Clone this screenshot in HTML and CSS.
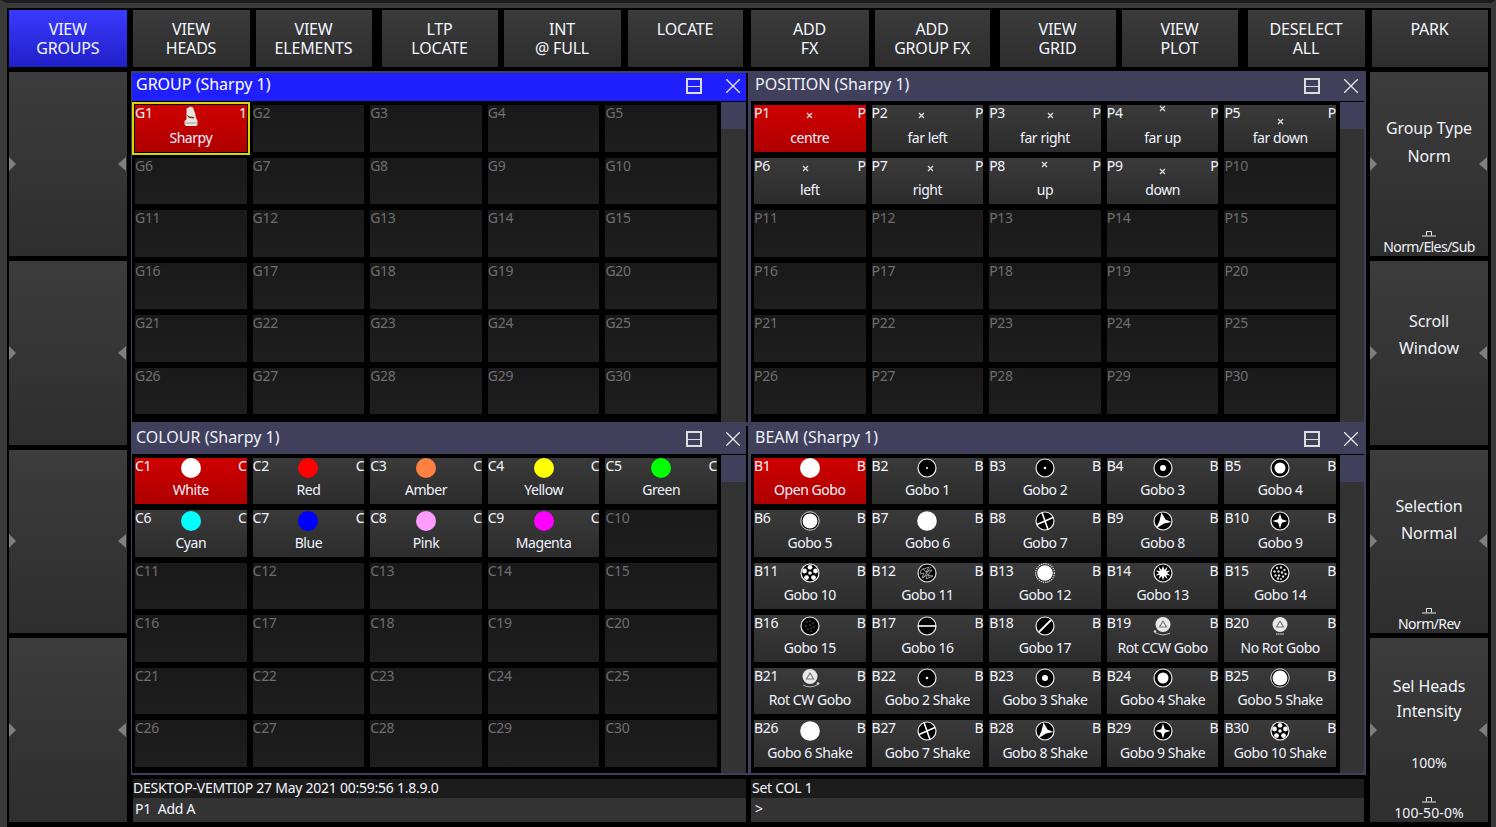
FILE: index.html
```html
<!DOCTYPE html>
<html lang="en">
<head>
<meta charset="utf-8">
<title>Console</title>
<link rel="stylesheet" href="styles.css">
</head>
<body>
<svg class="defs" aria-hidden="true">
  <symbol id="mk" viewBox="0 0 7 7"><path d="M1 1 6 6M6 1 1 6" stroke="#ddd" stroke-width="1.3" fill="none"/></symbol>
  <symbol id="sharpy" viewBox="0 0 20 20"><path d="M5.500 2.500 9.500 0.500 12 1.500 14 7l1.500 6 1 1.500V19l-1.500 1H5l-1.500-1.500V15l2-1.500z" fill="#e8e4e0"/><path d="M5.500 9l3.500 1.500 4.500.5-1 1.500-4.500-.5z" fill="#8a3030"/><path d="M4 16.500h12v1H4z" fill="#a09a96"/></symbol>
  <symbol id="open" viewBox="0 0 20 20"><circle cx="10" cy="10" r="10" fill="#fff"/></symbol>
  <symbol id="g1" viewBox="0 0 20 20"><circle cx="10" cy="10" r="9" fill="#000" stroke="#eee" stroke-width="1.200"/><circle cx="10" cy="10" r="1" fill="#fff"/></symbol>
  <symbol id="g2" viewBox="0 0 20 20"><circle cx="10" cy="10" r="9" fill="#000" stroke="#eee" stroke-width="1.200"/><circle cx="10" cy="10" r="1.300" fill="#fff"/></symbol>
  <symbol id="g3" viewBox="0 0 20 20"><circle cx="10" cy="10" r="9" fill="#000" stroke="#eee" stroke-width="1.200"/><circle cx="10" cy="10" r="3" fill="#fff"/></symbol>
  <symbol id="g4" viewBox="0 0 20 20"><circle cx="10" cy="10" r="9" fill="#000" stroke="#eee" stroke-width="1.200"/><circle cx="10" cy="10" r="5.500" fill="#fff"/></symbol>
  <symbol id="g5" viewBox="0 0 20 20"><circle cx="10" cy="10" r="9.200" fill="#000" stroke="#ddd"/><circle cx="10" cy="10" r="7.500" fill="#fff"/></symbol>
  <symbol id="g6" viewBox="0 0 20 20"><circle cx="10" cy="10" r="9.800" fill="#fff"/></symbol>
  <symbol id="g7" viewBox="0 0 20 20"><circle cx="10" cy="10" r="9" fill="#000" stroke="#eee" stroke-width="1.200"/><path d="M2 13.500 18 6.500M7 1.500l6 17" stroke="#fff" stroke-width="1.600" fill="none"/></symbol>
  <symbol id="g8" viewBox="0 0 20 20"><circle cx="10" cy="10" r="9" fill="#000" stroke="#eee" stroke-width="1.200"/><path d="M8.500 1.500 12.500 8.500 18.500 11 11 12.500 3 17.500 6.500 10z" fill="#fff"/></symbol>
  <symbol id="g9" viewBox="0 0 20 20"><circle cx="10" cy="10" r="9" fill="#000" stroke="#eee" stroke-width="1.200"/><path d="M10 2.500 11.800 8.200 17.500 10 11.800 11.800 10 17.500 8.200 11.800 2.500 10 8.200 8.200z" fill="#fff"/></symbol>
  <symbol id="g10" viewBox="0 0 20 20"><circle cx="10" cy="10" r="9.500" fill="#fff"/><circle cx="10" cy="10" r="8.400" fill="#000"/><g fill="#fff"><circle cx="10" cy="4.300" r="2.400"/><circle cx="15.500" cy="8" r="2.400"/><circle cx="13.500" cy="14.600" r="2.400"/><circle cx="6.500" cy="14.600" r="2.400"/><circle cx="4.500" cy="8" r="2.400"/><circle cx="10" cy="10" r="1.800"/></g></symbol>
  <symbol id="g11" viewBox="0 0 20 20"><circle cx="10" cy="10" r="9" fill="#000" stroke="#ddd" stroke-width="1.200"/><path d="M4 7l8-3-3 5 6-2-4 5 5 1-7 3 1-4-5 3 2-5-4 1zM6 5l7 10M14 4 6 15" stroke="#ccc" stroke-width=".7" fill="none"/></symbol>
  <symbol id="g12" viewBox="0 0 20 20"><circle cx="10" cy="10" r="9.300" fill="#222" stroke="#fff" stroke-width="1.200" stroke-dasharray="1.200 1"/><circle cx="10" cy="10" r="7.800" fill="#fff"/></symbol>
  <symbol id="g13" viewBox="0 0 20 20"><circle cx="10" cy="10" r="9" fill="#000" stroke="#eee" stroke-width="1.200"/><path d="M10 2.500 11.300 7 14.500 3.600 13.200 8 17.500 7.500 14 10 17.500 12.500 13.200 12 14.500 16.400 11.300 13 10 17.500 8.700 13 5.500 16.400 6.800 12 2.500 12.500 6 10 2.500 7.500 6.800 8 5.500 3.600 8.700 7z" fill="#fff"/></symbol>
  <symbol id="g14" viewBox="0 0 20 20"><circle cx="10" cy="10" r="9" fill="#000" stroke="#eee" stroke-width="1.200"/><g fill="#ddd"><circle cx="7" cy="5" r="1.200"/><circle cx="11" cy="4.500" r="1.200"/><circle cx="14.500" cy="7" r="1.200"/><circle cx="4.500" cy="8.500" r="1.200"/><circle cx="8.500" cy="8.500" r="1.200"/><circle cx="12" cy="9.500" r="1.200"/><circle cx="15.500" cy="11" r="1.200"/><circle cx="5.500" cy="12.500" r="1.200"/><circle cx="9" cy="12.500" r="1.200"/><circle cx="13" cy="13.500" r="1.200"/><circle cx="8" cy="15.500" r="1.200"/><circle cx="11" cy="16" r="1"/></g></symbol>
  <symbol id="g15" viewBox="0 0 20 20"><circle cx="10" cy="10" r="9" fill="#000" stroke="#eee" stroke-width="1.200"/><g fill="#bbb"><circle cx="7" cy="6" r=".6"/><circle cx="10" cy="5" r=".6"/><circle cx="13" cy="7" r=".6"/><circle cx="6" cy="10" r=".6"/><circle cx="10" cy="9" r=".6"/><circle cx="14" cy="11" r=".6"/><circle cx="8" cy="13" r=".6"/><circle cx="11" cy="12" r=".6"/><circle cx="11" cy="15" r=".6"/></g></symbol>
  <symbol id="g16" viewBox="0 0 20 20"><circle cx="10" cy="10" r="9" fill="#000" stroke="#eee" stroke-width="1.200"/><path d="M1 10h18" stroke="#fff" stroke-width="1.600"/></symbol>
  <symbol id="g17" viewBox="0 0 20 20"><circle cx="10" cy="10" r="9" fill="#000" stroke="#eee" stroke-width="1.200"/><path d="M4 16 16 4" stroke="#fff" stroke-width="1.800"/></symbol>
  <symbol id="rot" viewBox="0 0 20 20"><circle cx="10" cy="8.500" r="7.500" fill="#e8e8e8"/><path d="M10 4l4.500 7.500h-9z" fill="#777"/><path d="M10 6.200l2.600 4.300H7.400z" fill="#eee"/></symbol>
  <symbol id="rotccw" viewBox="0 0 20 20"><use href="#rot"/><path d="M2 16.500Q10 21 17 17" stroke="#bbb" fill="none"/><circle cx="2" cy="15.500" r="1.300" fill="#ddd"/></symbol>
  <symbol id="rotcw" viewBox="0 0 20 20"><use href="#rot"/><path d="M3 17Q10 21 18 16.500" stroke="#bbb" fill="none"/><circle cx="18" cy="15.500" r="1.300" fill="#ddd"/></symbol>
  <symbol id="norot" viewBox="0 0 20 20"><use href="#rot"/><path d="M6 18h8" stroke="#999" stroke-width="2" stroke-dasharray="1.500 .6"/></symbol>
  <symbol id="hold" viewBox="0 0 14 6"><path d="M4.500 4.500V.5h5v4M0 5h14" stroke="#e8e8e8" fill="none"/></symbol>
</svg>

<div class="app">
  <div class="top">
    <div class="btn active">VIEW<br>GROUPS</div>
    <div class="btn">VIEW<br>HEADS</div>
    <div class="btn">VIEW<br>ELEMENTS</div>
    <div class="btn">LTP<br>LOCATE</div>
    <div class="btn">INT<br>@ FULL</div>
    <div class="btn">LOCATE</div>
    <div class="btn">ADD<br>FX</div>
    <div class="btn">ADD<br>GROUP FX</div>
    <div class="btn">VIEW<br>GRID</div>
    <div class="btn">VIEW<br>PLOT</div>
    <div class="btn">DESELECT<br>ALL</div>
    <div class="btn">PARK</div>
  </div>

  <div class="main">
    <div class="side side-left">
      <div class="key"><i class="tri tri-r"></i><i class="tri tri-l"></i></div>
      <div class="key"><i class="tri tri-r"></i><i class="tri tri-l"></i></div>
      <div class="key"><i class="tri tri-r"></i><i class="tri tri-l"></i></div>
      <div class="key"><i class="tri tri-r"></i><i class="tri tri-l"></i></div>
    </div>

    <div class="center">
      <section class="panel panel-l">
        <header class="head head-on"><span class="title">GROUP (Sharpy 1)</span><i class="split"></i><svg class="close" viewBox="0 0 14 14"><path d="M0 0 14 14M14 0 0 14"/></svg></header>
        <div class="body">
          <div class="grid">
            <div class="cell on sel"><span class="id">G1</span><span class="type">1</span><svg class="ico"><use href="#sharpy"/></svg><span class="name">Sharpy</span></div>
            <div class="cell empty"><span class="id">G2</span></div>
            <div class="cell empty"><span class="id">G3</span></div>
            <div class="cell empty"><span class="id">G4</span></div>
            <div class="cell empty"><span class="id">G5</span></div>
            <div class="cell empty"><span class="id">G6</span></div>
            <div class="cell empty"><span class="id">G7</span></div>
            <div class="cell empty"><span class="id">G8</span></div>
            <div class="cell empty"><span class="id">G9</span></div>
            <div class="cell empty"><span class="id">G10</span></div>
            <div class="cell empty"><span class="id">G11</span></div>
            <div class="cell empty"><span class="id">G12</span></div>
            <div class="cell empty"><span class="id">G13</span></div>
            <div class="cell empty"><span class="id">G14</span></div>
            <div class="cell empty"><span class="id">G15</span></div>
            <div class="cell empty"><span class="id">G16</span></div>
            <div class="cell empty"><span class="id">G17</span></div>
            <div class="cell empty"><span class="id">G18</span></div>
            <div class="cell empty"><span class="id">G19</span></div>
            <div class="cell empty"><span class="id">G20</span></div>
            <div class="cell empty"><span class="id">G21</span></div>
            <div class="cell empty"><span class="id">G22</span></div>
            <div class="cell empty"><span class="id">G23</span></div>
            <div class="cell empty"><span class="id">G24</span></div>
            <div class="cell empty"><span class="id">G25</span></div>
            <div class="cell empty"><span class="id">G26</span></div>
            <div class="cell empty"><span class="id">G27</span></div>
            <div class="cell empty"><span class="id">G28</span></div>
            <div class="cell empty"><span class="id">G29</span></div>
            <div class="cell empty"><span class="id">G30</span></div>
          </div>
          <div class="scroll"><i class="thumb"></i></div>
        </div>
      </section>

      <section class="panel panel-r">
        <header class="head"><span class="title">POSITION (Sharpy 1)</span><i class="split"></i><svg class="close" viewBox="0 0 14 14"><path d="M0 0 14 14M14 0 0 14"/></svg></header>
        <div class="body">
          <div class="grid">
            <div class="cell on"><span class="id">P1</span><span class="type">P</span><svg class="mark"><use href="#mk"/></svg><span class="name">centre</span></div>
            <div class="cell"><span class="id">P2</span><span class="type">P</span><svg class="mark m-farleft"><use href="#mk"/></svg><span class="name">far left</span></div>
            <div class="cell"><span class="id">P3</span><span class="type">P</span><svg class="mark m-farright"><use href="#mk"/></svg><span class="name">far right</span></div>
            <div class="cell"><span class="id">P4</span><span class="type">P</span><svg class="mark m-farup"><use href="#mk"/></svg><span class="name">far up</span></div>
            <div class="cell"><span class="id">P5</span><span class="type">P</span><svg class="mark m-fardown"><use href="#mk"/></svg><span class="name">far down</span></div>
            <div class="cell"><span class="id">P6</span><span class="type">P</span><svg class="mark m-left"><use href="#mk"/></svg><span class="name">left</span></div>
            <div class="cell"><span class="id">P7</span><span class="type">P</span><svg class="mark m-right"><use href="#mk"/></svg><span class="name">right</span></div>
            <div class="cell"><span class="id">P8</span><span class="type">P</span><svg class="mark m-up"><use href="#mk"/></svg><span class="name">up</span></div>
            <div class="cell"><span class="id">P9</span><span class="type">P</span><svg class="mark m-down"><use href="#mk"/></svg><span class="name">down</span></div>
            <div class="cell empty"><span class="id">P10</span></div>
            <div class="cell empty"><span class="id">P11</span></div>
            <div class="cell empty"><span class="id">P12</span></div>
            <div class="cell empty"><span class="id">P13</span></div>
            <div class="cell empty"><span class="id">P14</span></div>
            <div class="cell empty"><span class="id">P15</span></div>
            <div class="cell empty"><span class="id">P16</span></div>
            <div class="cell empty"><span class="id">P17</span></div>
            <div class="cell empty"><span class="id">P18</span></div>
            <div class="cell empty"><span class="id">P19</span></div>
            <div class="cell empty"><span class="id">P20</span></div>
            <div class="cell empty"><span class="id">P21</span></div>
            <div class="cell empty"><span class="id">P22</span></div>
            <div class="cell empty"><span class="id">P23</span></div>
            <div class="cell empty"><span class="id">P24</span></div>
            <div class="cell empty"><span class="id">P25</span></div>
            <div class="cell empty"><span class="id">P26</span></div>
            <div class="cell empty"><span class="id">P27</span></div>
            <div class="cell empty"><span class="id">P28</span></div>
            <div class="cell empty"><span class="id">P29</span></div>
            <div class="cell empty"><span class="id">P30</span></div>
          </div>
          <div class="scroll"><i class="thumb"></i></div>
        </div>
      </section>

      <section class="panel panel-l">
        <header class="head"><span class="title">COLOUR (Sharpy 1)</span><i class="split"></i><svg class="close" viewBox="0 0 14 14"><path d="M0 0 14 14M14 0 0 14"/></svg></header>
        <div class="body">
          <div class="grid">
            <div class="cell on"><span class="id">C1</span><span class="type">C</span><i class="dot c-white"></i><span class="name">White</span></div>
            <div class="cell"><span class="id">C2</span><span class="type">C</span><i class="dot c-red"></i><span class="name">Red</span></div>
            <div class="cell"><span class="id">C3</span><span class="type">C</span><i class="dot c-amber"></i><span class="name">Amber</span></div>
            <div class="cell"><span class="id">C4</span><span class="type">C</span><i class="dot c-yellow"></i><span class="name">Yellow</span></div>
            <div class="cell"><span class="id">C5</span><span class="type">C</span><i class="dot c-green"></i><span class="name">Green</span></div>
            <div class="cell"><span class="id">C6</span><span class="type">C</span><i class="dot c-cyan"></i><span class="name">Cyan</span></div>
            <div class="cell"><span class="id">C7</span><span class="type">C</span><i class="dot c-blue"></i><span class="name">Blue</span></div>
            <div class="cell"><span class="id">C8</span><span class="type">C</span><i class="dot c-pink"></i><span class="name">Pink</span></div>
            <div class="cell"><span class="id">C9</span><span class="type">C</span><i class="dot c-magenta"></i><span class="name">Magenta</span></div>
            <div class="cell empty"><span class="id">C10</span></div>
            <div class="cell empty"><span class="id">C11</span></div>
            <div class="cell empty"><span class="id">C12</span></div>
            <div class="cell empty"><span class="id">C13</span></div>
            <div class="cell empty"><span class="id">C14</span></div>
            <div class="cell empty"><span class="id">C15</span></div>
            <div class="cell empty"><span class="id">C16</span></div>
            <div class="cell empty"><span class="id">C17</span></div>
            <div class="cell empty"><span class="id">C18</span></div>
            <div class="cell empty"><span class="id">C19</span></div>
            <div class="cell empty"><span class="id">C20</span></div>
            <div class="cell empty"><span class="id">C21</span></div>
            <div class="cell empty"><span class="id">C22</span></div>
            <div class="cell empty"><span class="id">C23</span></div>
            <div class="cell empty"><span class="id">C24</span></div>
            <div class="cell empty"><span class="id">C25</span></div>
            <div class="cell empty"><span class="id">C26</span></div>
            <div class="cell empty"><span class="id">C27</span></div>
            <div class="cell empty"><span class="id">C28</span></div>
            <div class="cell empty"><span class="id">C29</span></div>
            <div class="cell empty"><span class="id">C30</span></div>
          </div>
          <div class="scroll"><i class="thumb"></i></div>
        </div>
      </section>

      <section class="panel panel-r">
        <header class="head"><span class="title">BEAM (Sharpy 1)</span><i class="split"></i><svg class="close" viewBox="0 0 14 14"><path d="M0 0 14 14M14 0 0 14"/></svg></header>
        <div class="body">
          <div class="grid">
            <div class="cell on"><span class="id">B1</span><span class="type">B</span><svg class="ico"><use href="#open"/></svg><span class="name">Open Gobo</span></div>
            <div class="cell"><span class="id">B2</span><span class="type">B</span><svg class="ico"><use href="#g1"/></svg><span class="name">Gobo 1</span></div>
            <div class="cell"><span class="id">B3</span><span class="type">B</span><svg class="ico"><use href="#g2"/></svg><span class="name">Gobo 2</span></div>
            <div class="cell"><span class="id">B4</span><span class="type">B</span><svg class="ico"><use href="#g3"/></svg><span class="name">Gobo 3</span></div>
            <div class="cell"><span class="id">B5</span><span class="type">B</span><svg class="ico"><use href="#g4"/></svg><span class="name">Gobo 4</span></div>
            <div class="cell"><span class="id">B6</span><span class="type">B</span><svg class="ico"><use href="#g5"/></svg><span class="name">Gobo 5</span></div>
            <div class="cell"><span class="id">B7</span><span class="type">B</span><svg class="ico"><use href="#g6"/></svg><span class="name">Gobo 6</span></div>
            <div class="cell"><span class="id">B8</span><span class="type">B</span><svg class="ico"><use href="#g7"/></svg><span class="name">Gobo 7</span></div>
            <div class="cell"><span class="id">B9</span><span class="type">B</span><svg class="ico"><use href="#g8"/></svg><span class="name">Gobo 8</span></div>
            <div class="cell"><span class="id">B10</span><span class="type">B</span><svg class="ico"><use href="#g9"/></svg><span class="name">Gobo 9</span></div>
            <div class="cell"><span class="id">B11</span><span class="type">B</span><svg class="ico"><use href="#g10"/></svg><span class="name">Gobo 10</span></div>
            <div class="cell"><span class="id">B12</span><span class="type">B</span><svg class="ico"><use href="#g11"/></svg><span class="name">Gobo 11</span></div>
            <div class="cell"><span class="id">B13</span><span class="type">B</span><svg class="ico"><use href="#g12"/></svg><span class="name">Gobo 12</span></div>
            <div class="cell"><span class="id">B14</span><span class="type">B</span><svg class="ico"><use href="#g13"/></svg><span class="name">Gobo 13</span></div>
            <div class="cell"><span class="id">B15</span><span class="type">B</span><svg class="ico"><use href="#g14"/></svg><span class="name">Gobo 14</span></div>
            <div class="cell"><span class="id">B16</span><span class="type">B</span><svg class="ico"><use href="#g15"/></svg><span class="name">Gobo 15</span></div>
            <div class="cell"><span class="id">B17</span><span class="type">B</span><svg class="ico"><use href="#g16"/></svg><span class="name">Gobo 16</span></div>
            <div class="cell"><span class="id">B18</span><span class="type">B</span><svg class="ico"><use href="#g17"/></svg><span class="name">Gobo 17</span></div>
            <div class="cell"><span class="id">B19</span><span class="type">B</span><svg class="ico"><use href="#rotccw"/></svg><span class="name">Rot CCW Gobo</span></div>
            <div class="cell"><span class="id">B20</span><span class="type">B</span><svg class="ico"><use href="#norot"/></svg><span class="name">No Rot Gobo</span></div>
            <div class="cell"><span class="id">B21</span><span class="type">B</span><svg class="ico"><use href="#rotcw"/></svg><span class="name">Rot CW Gobo</span></div>
            <div class="cell"><span class="id">B22</span><span class="type">B</span><svg class="ico"><use href="#g2"/></svg><span class="name">Gobo 2 Shake</span></div>
            <div class="cell"><span class="id">B23</span><span class="type">B</span><svg class="ico"><use href="#g3"/></svg><span class="name">Gobo 3 Shake</span></div>
            <div class="cell"><span class="id">B24</span><span class="type">B</span><svg class="ico"><use href="#g4"/></svg><span class="name">Gobo 4 Shake</span></div>
            <div class="cell"><span class="id">B25</span><span class="type">B</span><svg class="ico"><use href="#g5"/></svg><span class="name">Gobo 5 Shake</span></div>
            <div class="cell"><span class="id">B26</span><span class="type">B</span><svg class="ico"><use href="#g6"/></svg><span class="name">Gobo 6 Shake</span></div>
            <div class="cell"><span class="id">B27</span><span class="type">B</span><svg class="ico"><use href="#g7"/></svg><span class="name">Gobo 7 Shake</span></div>
            <div class="cell"><span class="id">B28</span><span class="type">B</span><svg class="ico"><use href="#g8"/></svg><span class="name">Gobo 8 Shake</span></div>
            <div class="cell"><span class="id">B29</span><span class="type">B</span><svg class="ico"><use href="#g9"/></svg><span class="name">Gobo 9 Shake</span></div>
            <div class="cell"><span class="id">B30</span><span class="type">B</span><svg class="ico"><use href="#g10"/></svg><span class="name">Gobo 10 Shake</span></div>
          </div>
          <div class="scroll"><i class="thumb"></i></div>
        </div>
      </section>

      <div class="cmds">
        <div class="cmd">
          <div class="cmd-status">DESKTOP-VEMTI0P 27 May 2021 00:59:56 1.8.9.0</div>
          <div class="cmd-line">P1&nbsp; Add A</div>
        </div>
        <div class="cmd cmd-r">
          <div class="cmd-status">Set COL 1</div>
          <div class="cmd-line">&gt;</div>
        </div>
      </div>
    </div>

    <div class="side side-right">
      <div class="key key-a"><i class="tri tri-r"></i><i class="tri tri-l"></i>
        <span class="kl">Group Type</span><span class="kl">Norm</span>
        <span class="foot"><svg class="hold"><use href="#hold"/></svg>Norm/Eles/Sub</span>
      </div>
      <div class="key key-b"><i class="tri tri-r"></i><i class="tri tri-l"></i>
        <span class="kl">Scroll</span><span class="kl">Window</span>
      </div>
      <div class="key key-d"><i class="tri tri-r"></i><i class="tri tri-l"></i>
        <span class="kl">Selection</span><span class="kl">Normal</span>
        <span class="foot"><svg class="hold"><use href="#hold"/></svg>Norm/Rev</span>
      </div>
      <div class="key key-c"><i class="tri tri-r"></i><i class="tri tri-l"></i>
        <span class="kl">Sel Heads</span><span class="kl">Intensity</span>
        <span class="kv">100%</span>
        <span class="foot foot-num"><svg class="hold"><use href="#hold"/></svg>100-50-0%</span>
      </div>
    </div>
  </div>
</div>
</body>
</html>
```
FILE: styles.css
```css
* { box-sizing: border-box; }
html, body { margin: 0; padding: 0; background: #000; }
body {
  width: 1496px; height: 827px; overflow: hidden;
  font-family: "Noto Sans", "DejaVu Sans", sans-serif;
  color: #fff;
}
.defs { position: absolute; width: 0; height: 0; }
i { display: block; }

.app {
  width: 1496px; height: 827px;
  background: #000;
  border-top: 3px solid #1c1c1c;
  display: flex; flex-direction: column;
  padding: 7px 3px 5px 2px;
  position: relative;
  border-left: 7px solid #3a3a3a;
  border-right: 5px solid #3a3a3a;
}
.app::before {
  content: ""; position: absolute; left: -7px; right: -5px; top: 0; height: 5px; background: #3a3a3a;
}

.top { display: flex; gap: 6px; height: 57px; flex: none; }
.btn {
  flex: none; width: 117px; height: 57px; padding-top: 10px;
  background: linear-gradient(#3b3b3b, #2d2d2d);
  color: #f4f6ff;
  font-size: 16px; line-height: 19px; letter-spacing: -0.2px;
  text-align: center;
}
.btn:nth-child(1) { width: 117.5px; }
.btn:nth-child(3) { width: 116px; }
.btn:nth-child(4) { width: 116px; margin-left: 4px; }
.btn:nth-child(6) { width: 115px; margin-left: 1px; }
.btn:nth-child(7) { width: 118px; margin-left: 2px; }
.btn:nth-child(8) { width: 115px; }
.btn:nth-child(9) { width: 116px; margin-left: 4px; }
.btn:nth-child(10) { width: 116px; }
.btn:nth-child(11) { margin-left: 4px; }
.btn:nth-child(12) { width: 116px; margin-left: 1px; }
.btn.active { background: linear-gradient(#3a3aff, #2020c8); }

.main { display: flex; flex: 1; min-height: 0; margin-top: 4px; }
.side {
  display: grid; grid-template-rows: repeat(4, minmax(0, 1fr));
  row-gap: 5px; flex: none; padding-top: 1px;
}
.side-left { width: 117.5px; margin-right: 4.5px; }
.side-right { width: 118px; margin-left: 4px; }
.key {
  position: relative; min-height: 0;
  background: linear-gradient(#3c3c3c, #2e2e2e);
  display: flex; flex-direction: column; align-items: center;
  font-size: 16px; letter-spacing: -0.1px; color: #f0f3fa; text-align: center;
}
.tri { position: absolute; top: 50%; width: 0; height: 0; margin-top: -7px; border-style: solid; border-color: transparent; }
.tri-r { left: 0; border-width: 7px 0 7px 7px; border-left-color: #7f7f7f; }
.tri-l { right: 1px; border-width: 7px 8px 7px 0; border-right-color: #7f7f7f; }

.kl { line-height: 28px; }
.key-a { padding-top: 42px; }
.key-b { padding-top: 47.5px; }
.key-b .kl, .key-d .kl { line-height: 27px; }
.key-d { padding-top: 43.5px; }
.key-c { padding-top: 36px; }
.key-c .kl { line-height: 25px; }
.kv { font-size: 14px; line-height: 18px; margin-top: 30px; }
.foot {
  margin-top: auto; display: flex; flex-direction: column; align-items: center;
  font-size: 14px; line-height: 18px; letter-spacing: -0.6px;
}
.foot-num { letter-spacing: 0.1px; }
.hold { width: 14px; height: 6px; display: block; margin-bottom: 1px; }

.center {
  width: 1235px; flex: none;
  display: grid;
  grid-template-columns: 619px 616px;
  grid-template-rows: 352.5px 351.5px 47px;
  align-content: start;
}
.panel {
  background: #000;
  border: 2px solid #40405c;
  border-left-width: 1px;
  display: flex; flex-direction: column; min-height: 0;
}
.panel-l .body { padding-right: 2px; }
.panel-l .head { margin-right: 2px; }
.panel-r .scroll { width: 24px; }
.head {
  flex: none; height: 28px; background: #40405c;
  display: flex; align-items: center;
  padding: 0 6px 0 4px;
  font-size: 16px; color: #eef0fa;
}
.head-on { background: #2020ff; color: #fff; }
.title { flex: 1; padding-bottom: 6px; }
.split {
  width: 16px; height: 16px; margin: 0 24px 2px 0;
  border: 2px solid #ddd;
  background: linear-gradient(transparent 6px, #ddd 6px, #ddd 7px, transparent 7px);
}
.close { width: 14px; height: 14px; margin-bottom: 2px; }
.close path { stroke: #e8e8e8; stroke-width: 1.3; fill: none; }

.body { flex: 1; display: flex; min-height: 0; padding-left: 3px; }
.grid {
  flex: none; width: 582px; margin-top: 4px;
  display: grid;
  grid-template-columns: repeat(5, 111.6px);
  grid-auto-rows: 46.5px;
  gap: 6px;
}
.scroll { flex: none; width: 25px; margin-left: 4px; margin-top: 1px; background: #333; }
.thumb { height: 27px; background: #40405c; }

.cell {
  position: relative; min-width: 0;
  background: linear-gradient(#3a3a3a, #2c2c2c);
  display: flex; flex-direction: column; align-items: center;
}
.cell.empty { background: linear-gradient(#191919, #1f1f1f); }
.cell.on { background: linear-gradient(#cf0000, #ae0000); }
.cell.sel { outline: 2px solid #d8d800; outline-offset: 1px; }
.cell.sel::after { content: ""; position: absolute; inset: -1px; border: 1px solid #000; pointer-events: none; }
.id, .type {
  position: absolute; top: -1px; font-size: 14px; line-height: 18px; letter-spacing: -0.3px; color: #f4f6ff;
}
.id { left: 0; }
.type { right: 0; }
.empty .id { color: #6e6e6e; }
.name { font-size: 14px; line-height: 18px; letter-spacing: -0.45px; margin-top: 3px; color: #f0f4ff; white-space: nowrap; }
.ico { width: 20px; height: 20px; margin-top: 0.5px; display: block; flex: none; }
.dot { width: 20px; height: 20px; margin-top: 0.5px; border-radius: 50%; flex: none; }
.c-white { background: #fff; }
.c-red { background: #ff0000; }
.c-amber { background: #ff8040; }
.c-yellow { background: #ffff00; }
.c-green { background: #00ff00; }
.c-cyan { background: #00ffff; }
.c-blue { background: #0000ff; }
.c-pink { background: #ff9cff; }
.c-magenta { background: #ff00ff; }

.mark { width: 7px; height: 7px; display: block; flex: none; margin: 6.5px 0 7px; }
.m-farleft { transform: translate(-6px, 0); }
.m-farright { transform: translate(6px, 0); }
.m-farup { transform: translate(0, -7px); }
.m-fardown { transform: translate(0, 6px); }
.m-left { transform: translate(-4px, 1px); }
.m-right { transform: translate(3px, 1px); }
.m-up { transform: translate(0, -3px); }
.m-down { transform: translate(0, 4px); }

.cmds { grid-column: 1 / 3; display: flex; gap: 5px; margin: 4px 0 0 2px; }
.cmd { width: 613px; display: flex; flex-direction: column; }
.cmd-status {
  height: 19px; background: #1c1c1c; font-size: 14px; line-height: 18px; letter-spacing: -0.25px; color: #f4f6ff;
}
.cmd-line {
  height: 24px; background: #333; font-size: 14px; line-height: 22px; letter-spacing: -0.25px; color: #f4f6ff; padding-left: 2px;
}
.cmd-r .cmd-status { padding-left: 1px; }
.cmd-r .cmd-line { padding-left: 4px; }
```
